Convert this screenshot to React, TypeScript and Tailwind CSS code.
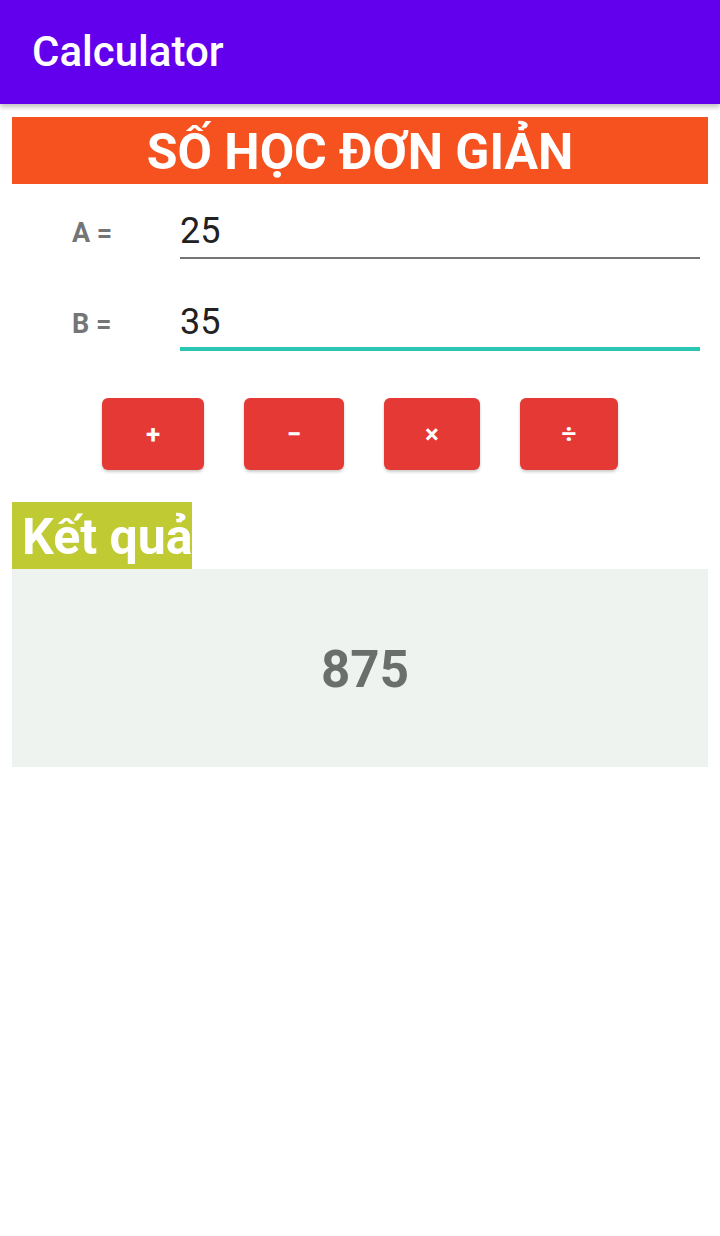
import React, { useState } from 'react';

const ops = [
  { label: '+', w: 'w-[102px]' },
  { label: '−', w: 'w-[100px]' },
  { label: '×', w: 'w-[96px]' },
  { label: '÷', w: 'w-[98px]' },
];

const App: React.FC = () => {
  const [a, setA] = useState('25');
  const [b, setB] = useState('35');

  return (
    <div className="min-h-[1236px] bg-white font-['Roboto',sans-serif]">
      <header className="h-[104px] bg-[#6200ee] flex items-center pl-8 shadow-[0_3px_5px_rgba(0,0,0,0.25)] relative">
        <h1 className="text-[42px] font-medium text-white leading-none">Calculator</h1>
      </header>

      <main className="px-3 pt-[13px]">
        <div className="h-[67px] bg-[#f5521f] flex items-center justify-center pt-[3px]">
          <h2 className="text-[50px] font-bold text-white leading-none">SỐ HỌC ĐƠN GIẢN</h2>
        </div>

        <div className="flex items-end h-[75px]">
          <label className="w-[168px] pl-[60px] pb-[12px] text-[27px] font-bold text-[#757575] leading-none">A =</label>
          <input
            value={a}
            onChange={e => setA(e.target.value)}
            className="flex-1 mr-2 h-[54px] pb-0 text-[36px] text-[#212121] leading-none border-b-2 border-[#757575] outline-none bg-transparent"
          />
        </div>

        <div className="flex items-end h-[92px]">
          <label className="w-[168px] pl-[60px] pb-[13px] text-[27px] font-bold text-[#757575] leading-none">B =</label>
          <input
            value={b}
            onChange={e => setB(e.target.value)}
            className="flex-1 mr-2 h-[54px] pb-0 text-[36px] text-[#212121] leading-none border-b-4 border-[#2bc5b3] outline-none bg-transparent"
          />
        </div>

        <div className="flex justify-center gap-10 mt-[47px]">
          {ops.map(op => (
            <button
              key={op.label}
              className={`${op.w} h-[72px] rounded-md bg-[#e53935] text-white text-[26px] font-bold shadow-[0_2px_3px_rgba(0,0,0,0.2)]`}
            >
              {op.label}
            </button>
          ))}
        </div>

        <div className="mt-8">
          <div className="inline-flex items-center h-[67px] bg-[#c0ca33] pl-[10px] pt-[3px]">
            <span className="text-[50px] font-bold text-white leading-none">Kết quả</span>
          </div>
          <div className="h-[198px] bg-[#eff3f0] flex items-center justify-center pl-[10px] pt-[3px]">
            <span className="text-[51px] font-bold text-[#6b6f6c] leading-none">875</span>
          </div>
        </div>
      </main>
    </div>
  );
};

export default App;
